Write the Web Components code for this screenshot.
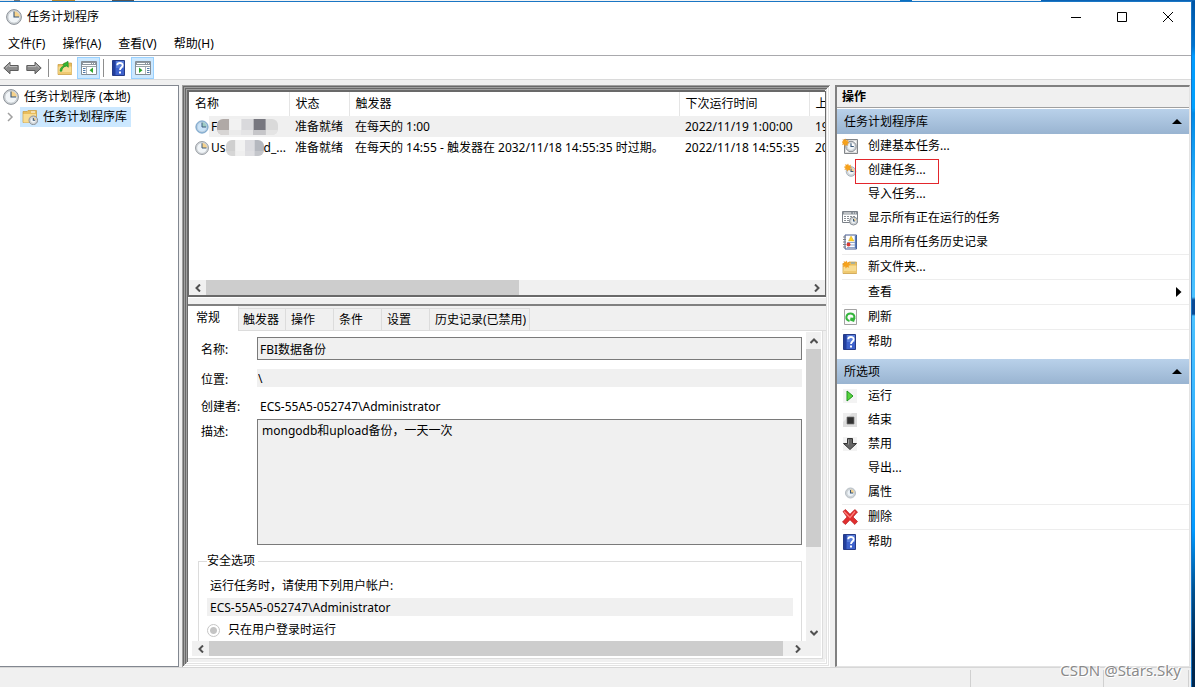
<!DOCTYPE html>
<html lang="zh-CN">
<head>
<meta charset="utf-8">
<title>任务计划程序</title>
<style>
html,body{margin:0;height:100%}
body{font:12px/16px "Noto Sans","Noto Sans CJK SC",sans-serif;color:#000;overflow:hidden}
</style>
</head>
<body>
<task-scheduler></task-scheduler>
<script>
const RESET = `*{box-sizing:border-box}
button{font:inherit;color:inherit;background:none;border:0;padding:0;margin:0;text-align:left}
input,textarea{font:inherit;color:inherit;margin:0;border-radius:0;outline:0}`;

function component(name, css, html, setup) {
  const tpl = document.createElement('template');
  tpl.innerHTML = `<style>${RESET}${css}</style>${html}`;
  customElements.define(name, class extends HTMLElement {
    connectedCallback() {
      if (this.shadowRoot) return;
      const root = this.attachShadow({mode: 'open'});
      root.append(tpl.content.cloneNode(true));
      if (setup) setup(root, this);
    }
  });
}

/* Icons, all on a 16 unit grid */
const clock = (cx, cy, r, face = '#f1f5f8', ring = '#8b9198') => `
  <circle cx="${cx}" cy="${cy}" r="${r}" fill="#d4d8db" stroke="${ring}" stroke-width="1"/>
  <circle cx="${cx}" cy="${cy}" r="${r - 1.4}" fill="${face}" stroke="#b5babf" stroke-width=".5"/>
  <path d="M${cx} ${cy}V${cy - r + 1.6}A${r - 1.6} ${r - 1.6} 0 0 1 ${cx + r - 1.6} ${cy}Z" fill="#f5d28c"/>
  <path d="M${cx} ${cy - r + 2}V${cy}H${cx + r - 2.4}" fill="none" stroke="#385779" stroke-width="1.1"/>`;
const star = (x, y) => `<path transform="translate(${x} ${y}) scale(.8)" d="M0 -4l1 2.4 2.6-1-1 2.6 2 1-2.4 1 .8 2.4-2.4-1-1.4 2-.8-2.6-2.6.6 1.2-2.2-2-1.2 2.4-.8-.8-2.4 2.4.8z" fill="#f6a21c" stroke="#e98a0a" stroke-width=".3"/>`;
const folder = `<path d="M1 4.5h5l1-1.5h7.5v11.5H1z" fill="#e9bd5b" stroke="#c79a3d" stroke-width=".7"/><path d="M1.4 6.5h13V14h-13z" fill="#f8dc92"/><path d="M1.4 12h13v2h-13z" fill="#efc970"/>`;
const pane = `<path d="M.5 1.5h15v13H.5z" fill="#fff" stroke="#858d95"/><path d="M1 2h14v3H1z" fill="#8e979f"/><path d="M2 3.5h8" stroke="#fff"/><path d="M11 3.5h1m1 0h1" stroke="#fff"/><path d="M1 6.5h14" stroke="#9ba3aa"/>`;
const ICONS = {
  clock: clock(8, 8, 7.4),
  clockBlue: clock(8, 8, 7, '#c9e3f8', '#6797c0').replace('#d4d8db', '#9fc5e5').replace('#f5d28c', '#9dccc3'),
  clockSmall: clock(8.5, 9, 5, '#edf3f8', '#b4bcc3'),
  back: `<path d="M0.8 8L7 2.2v3.3h8.2v5H7v3.3z" fill="#8c8c8c" stroke="#5c5c5c"/><path d="M3 7.6L6.2 4.5v2h8" fill="none" stroke="#bcbcbc"/>`,
  forward: `<path d="M15.2 8L9 2.2v3.3H.8v5H9v3.3z" fill="#8c8c8c" stroke="#5c5c5c"/><path d="M1.8 6.6h8.2v-2L13 7.5" fill="none" stroke="#bcbcbc"/>`,
  folderUp: folder + `<path d="M3 11.2c.2-3.4 1.8-5 4.2-5.2L5.8 4.5 11 1.3l.3 6-1.6-1.4C6.7 6.500 5 8 4.800 11.200z" fill="#35b835" stroke="#168a1f" stroke-width=".6"/>`,
  paneTree: pane + `<path d="M2 8.500h2.500M2 10.500h2.500M2 12.500h2.500" stroke="#4f79a8"/><path d="M5.500 7v7" stroke="#aab1b8"/><path d="M12 7.500v5.500L8.500 10.200z" fill="#2da62d"/>`,
  paneActions: pane + `<path d="M12 8.500h2.500M12 10.500h2.500M12 12.500h2.500" stroke="#4f79a8"/><path d="M10.500 7v7" stroke="#aab1b8"/><path d="M4 7.500v5.500l3.500-2.800z" fill="#2da62d"/>`,
  help: `<path d="M1.500.500h12v15h-12z" fill="#3e62cc" stroke="#273b86"/><path d="M2 1h2.500v14H2z" fill="#233f9c"/><path d="M5 1h8v7H5z" fill="#6d91e2" opacity=".6"/><path d="M6.200 5.300c.1-3.100 5.500-3.100 5.500 0 0 2.100-2.700 2.400-2.700 4.700" fill="none" stroke="#fff" stroke-width="1.800"/><path d="M8 11.600h2v2H8z" fill="#fff"/>`,
  folderClock: `<path d="M1 2.500h4l1-1h8.500v12H1z" fill="#e9bd5b" stroke="#c79a3d" stroke-width=".7"/><path d="M1.400 5H14v8.500H1.400z" fill="#f8dc92"/><path d="M9 3h4" stroke="#fff"/>` + clock(11.300, 11.300, 4.300),
  createBasic: `<path d="M2.500 1.500h13v14h-13z" fill="#dedede" stroke="#808488"/><path d="M4 3h10v11H4z" fill="#f9f9f9"/>` + clock(9, 8.500, 5.200).replace('#f5d28c', '#fff') + star(3.500, 4),
  create: clock(9, 9.500, 4.800).replace('#8b9198', '#a9b4be') + star(6, 5),
  running: `<path d="M.500 1.500h15v11H.500z" fill="#fff" stroke="#7b8188"/><path d="M1 2h14v2.500H1z" fill="#8d949b"/><path d="M11 3h1m1 0h1M2 3h7" stroke="#eee"/><path d="M2 6.500h12M2 8.500h12M2 10.500h7" stroke="#8a8f95" stroke-dasharray="2 1"/>` + clock(11.500, 11, 4),
  history: `<path d="M3 1h11.500v14H3z" fill="#fff" stroke="#445b91"/><path d="M13.500 1.500v13" stroke="#5579ba" stroke-width="1.500"/><path d="M1 3h3M1 5.500h3M1 8h3m-3 2.500h3M1 13h3" stroke="#808080"/><path d="M9 2l3 5H6.500z" fill="#ffd324" stroke="#c79b17" stroke-width=".4"/><path d="M5 8.500h8M8 11h5m-8 2.500h8" stroke="#90a6cb"/><circle cx="6.500" cy="10.500" r="2" fill="#d83b35"/>`,
  folderNew: folder + `<path d="M9 4h4" stroke="#6da6dd"/>` + star(4.500, 5),
  refresh: `<path d="M2.500.500h12v15h-12z" fill="#fbfbfb" stroke="#a2a2a2"/><path d="M7.500 12C2.500 10.500 4 4.500 8.500 4.500c4 0 5 4 2.500 6" fill="none" stroke="#35b53d" stroke-width="2"/><path d="M8.500 8.500l5 .500-1.500 4-4-1.500z" fill="#35b53d"/>`,
  run: `<path d="M1 1h14v14H1z" fill="#f3f3f3"/><path d="M5 3l6 5-6 5z" fill="#58d43e" stroke="#1e941f"/>`,
  end: `<path d="M1 1h14v14H1z" fill="#dedede"/><path d="M1 1h9L1 10z" fill="#efefef"/><path d="M5 5h7v7H5z" fill="#333" stroke="#777" stroke-width=".7"/>`,
  disable: `<path d="M1 1h14v14H1z" fill="#f3f3f3"/><path d="M5.500 2.500h5v5h4L8 13.500l-6.500-6h4z" fill="#666" stroke="#343434"/><path d="M6.500 3.500v5" stroke="#999"/>`,
  remove: `<path d="M1 2.500L3.500.500 8 5.300 12.800.500 15.500 3 11 8l4.500 4.500-2.700 3L8 10.800 3.500 15.500.500 13 5 8z" fill="#e02e2e" stroke="#b51f22" stroke-width=".7"/><path d="M2 2.500L8 8.500l5-6" fill="none" stroke="#ff7e79" stroke-width="1.200"/>`,
};
component('ui-icon', `:host{display:block;width:16px;height:16px;flex:none}svg{display:block;width:100%;height:100%}`,
  `<svg viewBox="0 0 16 16" aria-hidden="true"></svg>`,
  (r, h) => r.querySelector('svg').innerHTML = ICONS[h.getAttribute('name')] || '');

/* Title bar */
component('title-bar', `:host{display:flex;align-items:center;height:29px;padding-left:6px;background:#fff}
span{margin-left:5px;flex:1}button{width:46px;height:28px;display:grid;place-items:center}
svg{width:12px;height:12px;fill:none;stroke:#000;stroke-width:1}`,
`<ui-icon name="clock"></ui-icon><span><slot></slot></span>
<button aria-label="最小化"><svg viewBox="0 0 12 12"><path d="M1 6.500h10"/></svg></button>
<button aria-label="最大化"><svg viewBox="0 0 12 12"><path d="M1.500 1.500h9v9h-9z"/></svg></button>
<button aria-label="关闭"><svg viewBox="0 0 12 12"><path d="M1 1l10 10M11 1L1 11"/></svg></button>`);

component('menu-bar', `:host{display:flex;gap:17px;height:25px;padding:2px 8px 0;align-items:center;background:#fff;border-bottom:1px solid #a9a9ad}`,
`<button>文件(F)</button><button>操作(A)</button><button>查看(V)</button><button>帮助(H)</button>`);

component('tool-bar', `:host{display:flex;align-items:center;height:24px;padding:1px 3px 0;background:#fff;border-bottom:1px solid #dadada}
button{height:22px;display:grid;place-items:center;width:16px}.gap{margin-left:7px}
i{width:1px;height:18px;background:#8d8d8d;margin:0 8px 0 6px}
.on{width:23px;background:#cce8ff;border:1px solid #99d1ff;margin:0 0 0 4px}.near{margin:0 7px 0 3px}`,
`<button aria-label="后退"><ui-icon name="back"></ui-icon></button>
<button class="gap" aria-label="前进"><ui-icon name="forward"></ui-icon></button><i></i>
<button aria-label="向上"><ui-icon name="folderUp"></ui-icon></button>
<button class="on" aria-label="显示控制台树"><ui-icon name="paneTree"></ui-icon></button><i class="near"></i>
<button aria-label="帮助"><ui-icon name="help"></ui-icon></button>
<button class="on" aria-label="显示操作窗格"><ui-icon name="paneActions"></ui-icon></button>`);

component('tree-pane', `:host{display:block;background:#fff;border:1px solid #828790;border-left:0;padding:1px 0 0 3px}
div{display:flex;align-items:center;height:20px}.root span{margin-left:5px}
.child{padding-left:3px}.child svg{width:8px;height:10px;fill:none;stroke:#a0a0a0;stroke-width:1.500;margin-right:6px}
.child b{font-weight:400;display:flex;align-items:center;gap:5px;height:20px;background:#cce8ff;padding:0 4px 0 2px}`,
`<div class="root" role="treeitem"><ui-icon name="clock"></ui-icon><span>任务计划程序 (本地)</span></div>
<div class="child" role="treeitem"><svg viewBox="0 0 8 10"><path d="M2 1l4 4-4 4"/></svg><b><ui-icon name="folderClock"></ui-icon>任务计划程序库</b></div>`);

/* Scroll bar: the thumb length is a share of the track */
component('scroll-bar', `:host{display:flex;height:15px;background:#f0f0f0}:host([vertical]){flex-direction:column;width:15px;height:auto}
button{flex:none;width:17px;height:15px;display:grid;place-items:center}:host([vertical]) button{width:15px;height:17px}
.track{flex:1;min-height:0;display:flex;flex-direction:inherit}.thumb{flex:none;background:#cdcdcd}
svg{width:8px;height:8px;fill:none;stroke:#505050;stroke-width:2}:host([vertical]) svg{transform:rotate(90deg)}`,
`<button aria-label="向前滚动"><svg viewBox="0 0 8 8"><path d="M6 .500L2.500 4 6 7.500"/></svg></button>
<div class="track"><div class="thumb"></div></div>
<button aria-label="向后滚动"><svg viewBox="0 0 8 8"><path d="M2 .500L5.500 4 2 7.500"/></svg></button>`,
(r, h) => r.querySelector('.thumb').style.flexBasis = h.getAttribute('thumb'));

/* A redacted run of text */
component('redacted-text', `:host{display:inline-block;height:16px;border-radius:6px;overflow:hidden;vertical-align:middle}svg{display:block;width:100%;height:16px}
:host([kind=a]){width:61px}:host([kind=b]){width:38px}`,
`<svg preserveAspectRatio="none" aria-hidden="true"></svg>`,
(r, h) => {
  const a = h.getAttribute('kind') === 'a';
  const cells = a ? ['#b0a9a6','#f2f2f2','#d9d9dc','#77777f','#dadada'] : ['#cfcfcf','#f2f2f2','#dcdce0','#b5b8bf'];
  const s = r.querySelector('svg');
  s.setAttribute('viewBox', `0 0 ${cells.length * 13} 16`);
  s.innerHTML = cells.map((c, i) => `<path d="M${i * 13} 0h13v16h-13z" fill="${c}"/><path d="M${i * 13} 11h13v5h-13z" fill="#e8e8e8" opacity="${a ? .7 : .3}"/>`).join('');
});

component('task-list', `:host{display:flex;flex-direction:column;background:#fff;height:206px;border:solid #696969;border-width:1px 1px 2px;overflow:hidden}
.view{flex:1;overflow:hidden}table{border-collapse:collapse;table-layout:fixed;width:100%}
th{font-weight:400;text-align:left;height:24px;padding:0 6px;border-right:1px solid #e5e5e5}th:last-child{border:0}
td{height:21px;padding:0 6px;white-space:nowrap;overflow:hidden}th{white-space:nowrap;overflow:hidden}
th:last-child,td:last-child{padding-right:0}
.sel td{background:#f0f0f0}.sel td:first-child{background:linear-gradient(90deg,#fff 20px,#f0f0f0 20px)}
.name{display:flex;align-items:center;gap:2px}.name ui-icon{width:14px;height:14px}.name span{display:flex;align-items:center}`,
`<div class="view"><table><colgroup><col style="width:100px"><col style="width:60px"><col style="width:330px"><col style="width:130px"><col></colgroup>
<thead><tr><th>名称</th><th>状态</th><th>触发器</th><th>下次运行时间</th><th>上</th></tr></thead>
<tbody><tr class="sel"><td><div class="name"><ui-icon name="clockBlue"></ui-icon><span>F<redacted-text kind="a"></redacted-text></span></div></td><td>准备就绪</td><td>在每天的 1:00</td><td>2022/11/19 1:00:00</td><td>19</td></tr>
<tr><td><div class="name"><ui-icon name="clock"></ui-icon><span>Us<redacted-text kind="b"></redacted-text>d_...</span></div></td><td>准备就绪</td><td>在每天的 14:55 - 触发器在 2032/11/18 14:55:35 时过期。</td><td>2022/11/18 14:55:35</td><td>20</td></tr></tbody></table></div>
<scroll-bar thumb="52%"></scroll-bar>`);

component('tab-strip', `:host{display:flex;align-items:flex-end;background:linear-gradient(#f0f0f0 24px,#dcdcdc 24px);height:25px}
button{height:23px;padding:0 5px;min-width:48px;border:1px solid #dcdcdc;border-left:0}
button:first-of-type{min-width:51px;height:25px;padding:0 8px 2px;background:#fff;border-top-color:#fff;border-bottom:0}
button:nth-of-type(2){min-width:47px;padding-left:4px}button:last-of-type{padding-right:3px}`,
`<button>常规</button><button>触发器</button><button>操作</button><button>条件</button><button>设置</button><button>历史记录(已禁用)</button>`);

component('task-form', `:host{display:block;background:#fff;overflow:hidden;padding:5px 4px 0 10px}
.row{display:grid;grid-template-columns:59px 1fr;align-items:center;margin-bottom:8px}
.row label{padding:2px 0 0 3px}
input[type=text]{width:100%;height:18px;border:0;background:#f0f0f0;padding:0 3px}
.row .boxed{height:23px;border:1px solid #7a7a7a;padding:0 2px}.row .flush{padding:0 1px}
.row .plain{background:none}.row.place{margin-bottom:9px}.place label{padding-top:4px}.row.creator{margin-bottom:4px}.creator label{padding-top:1px}
.row.desc{align-items:start}.desc label{padding-top:5px}
textarea{display:block;width:100%;height:126px;background:#f0f0f0;border:1px solid #7a7a7a;resize:none;padding:3px 4px}
fieldset{margin:0;border:1px solid #dcdcdc;padding:9px 8px 40px;min-width:0}legend{padding:0 3px 0 0}
fieldset p{margin:0 0 4px;padding-left:3px}.radio{display:flex;align-items:center;gap:8px;margin-top:6px}
input[type=radio]{appearance:none;width:13px;height:13px;border:1px solid #c6c6c6;border-radius:50%;background:radial-gradient(#c4c4c4 3px,#fff 4px)}`,
`<div class="row"><label for="n">名称:</label><input id="n" type="text" class="boxed" readonly value="FBI数据备份"></div>
<div class="row place"><label for="l">位置:</label><input id="l" type="text" class="flush" readonly value="&#92;"></div>
<div class="row creator"><label for="c">创建者:</label><input id="c" type="text" class="plain" readonly value="ECS-55A5-052747&#92;Administrator"></div>
<div class="row desc"><label for="d">描述:</label><textarea id="d" readonly>mongodb和upload备份，一天一次</textarea></div>
<fieldset><legend>安全选项</legend><p><label for="u">运行任务时，请使用下列用户帐户:</label></p>
<input id="u" type="text" readonly value="ECS-55A5-052747&#92;Administrator">
<div class="radio"><input id="r" type="radio" checked><label for="r">只在用户登录时运行</label></div></fieldset>`);

component('task-details', `:host{display:flex;flex-direction:column;min-height:0;border-top:2px solid #808080;background:#f0f0f0}
.page{flex:1;min-height:0;display:grid;grid-template:minmax(0,1fr) 15px/minmax(0,1fr) 15px;background:#fff;padding:1px 1px 2px 0;margin-right:3px;border:1px solid #dcdcdc;border-width:0 1px 1px 0}
.h{margin-left:4px}.corner{background:#f0f0f0}`,
`<tab-strip></tab-strip><div class="page"><task-form></task-form><scroll-bar vertical thumb="72%"></scroll-bar><scroll-bar class="h" thumb="99%"></scroll-bar><div class="corner"></div></div>`);

/* Triple sunken edge around the result pane */
component('sunken-frame', `:host{display:flex;flex-direction:column;min-height:0;min-width:0;padding:6px 4px 8px 6px;background:#f0f0f0;
box-shadow:inset 1px 1px #a0a0a0,inset -1px -1px #fff,inset 2px 2px #696969,inset -2px -2px #e3e3e3,inset 3px 3px #a0a0a0,inset -3px -3px #fff,inset 4px 4px #696969,inset -4px -4px #e3e3e3,inset 5px 5px #a0a0a0,inset -5px -5px #fff,inset 6px 6px #696969}
::slotted(task-details){flex:1}`, `<slot></slot>`);

component('action-item', `:host{display:block}:host([ruled]){border-top:1px solid #ededed}
button{position:relative;display:flex;align-items:center;width:100%;height:24px;padding-right:7px}
ui-icon{margin-right:10px}span{flex:1}svg{width:6px;height:10px}
:host([marked]) button::after{content:"";position:absolute;left:13px;top:1px;width:82px;height:23px;border:1px solid #e3262c}`,
`<button><ui-icon></ui-icon><span><slot></slot></span></button>`,
(r, h) => {
  const old = r.querySelector('ui-icon'), icon = document.createElement('ui-icon');
  icon.setAttribute('name', h.getAttribute('icon') || '');
  old.replaceWith(icon);
  if (h.hasAttribute('submenu')) r.querySelector('button').insertAdjacentHTML('beforeend', '<svg viewBox="0 0 6 10" aria-hidden="true"><path d="M0 0l5.500 5L0 10z"/></svg>');
});
component('action-group', `:host{display:block;margin-bottom:5px}
header{display:flex;align-items:center;justify-content:space-between;height:25px;padding:0 7px;background:linear-gradient(#b9d1ea,#99b4d1)}
svg{width:10px;height:5px}.items{padding-left:5px}`,
`<header><span></span><svg viewBox="0 0 10 5" aria-hidden="true"><path d="M0 5l5-5 5 5z"/></svg></header><div class="items"><slot></slot></div>`,
(r, h) => r.querySelector('span').textContent = h.getAttribute('heading'));
component('actions-pane', `:host{display:block;background:#fff;border:solid #e3e3e3;border-width:2px 1px 1px 2px;border-top-color:#808080;border-left-color:#808080;overflow:hidden}
h2{margin:0 0 1px;font-size:12px;line-height:16px;height:21px;padding:2px 5px;background:#f0f0f0;border-bottom:1px solid #a0a0a0}`,
`<h2>操作</h2>
<action-group heading="任务计划程序库">
<action-item icon="createBasic">创建基本任务...</action-item><action-item icon="create" marked>创建任务...</action-item><action-item>导入任务...</action-item>
<action-item icon="running">显示所有正在运行的任务</action-item><action-item icon="history">启用所有任务历史记录</action-item>
<action-item icon="folderNew" ruled>新文件夹...</action-item><action-item ruled submenu>查看</action-item>
<action-item icon="refresh" ruled>刷新</action-item><action-item icon="help" ruled>帮助</action-item></action-group>
<action-group heading="所选项">
<action-item icon="run">运行</action-item><action-item icon="end">结束</action-item><action-item icon="disable">禁用</action-item><action-item>导出...</action-item>
<action-item icon="clockSmall">属性</action-item><action-item icon="remove" ruled>删除</action-item><action-item icon="help" ruled>帮助</action-item></action-group>`);

component('status-bar', `:host{display:flex;height:20px;background:#f0f0f0;border-top:1px solid #d7d7d7;padding-top:2px}
i{border-right:1px solid #d0d0d0}i:nth-of-type(1){flex:1}i:nth-of-type(2){width:133px}i:nth-of-type(3){width:85px;margin-right:2px}`, `<i></i><i></i><i></i>`);

component('task-scheduler', `:host{display:grid;grid-template:1px minmax(0,1fr)/minmax(0,1fr) 3px;height:100vh;position:relative}
.top{grid-column:1/3;background:linear-gradient(90deg,#e9e9e9 14px,#777 14px 20px,#eee 20px 52px,#b9882f 52px 75px,#eee 75px 112px,#555 112px 134px,#f4f4f4 134px 900px,#0a70c0 900px 912px,#f4f4f4 912px 1041px,#0a62b4 1041px)}
.window{display:flex;flex-direction:column;border:solid #1a76c4;border-width:1px 1px 0 0;background:#f0f0f0;min-width:0}
.desk{background:linear-gradient(#0054a4,#0074d0 45px,#009bff 55px,#00a2ff 107px,#008ae6 112px,#2fb6ff 200px,#4cc2ff 296px,#0b4a94 299px 313px,#4cc2ff 315px,#35b4ff 420px,#0099ff 530px,#00508f 590px,#00264d 650px)}
main{flex:1;min-height:0;display:grid;grid-template-columns:179px minmax(0,1fr) 355px;padding:5px 1px 0 0}
sunken-frame{margin:0 5px 0 3px}
task-list{flex:none}.split{flex:none;height:7px;background:#f0f0f0;border-top:1px solid #fff}
.mark{position:absolute;right:14px;bottom:7px;font-size:15px;line-height:20px;color:#8a8a8a;text-shadow:1px 1px #fff,-1px -1px #fff}`,
`<div class="top"></div><div class="window"><title-bar>任务计划程序</title-bar><menu-bar></menu-bar><tool-bar></tool-bar>
<main><tree-pane></tree-pane><sunken-frame><task-list></task-list><div class="split"></div><task-details></task-details></sunken-frame><actions-pane></actions-pane></main>
<status-bar></status-bar></div><div class="desk"></div><div class="mark">CSDN @Stars.Sky</div>`);
</script>
</body>
</html>
